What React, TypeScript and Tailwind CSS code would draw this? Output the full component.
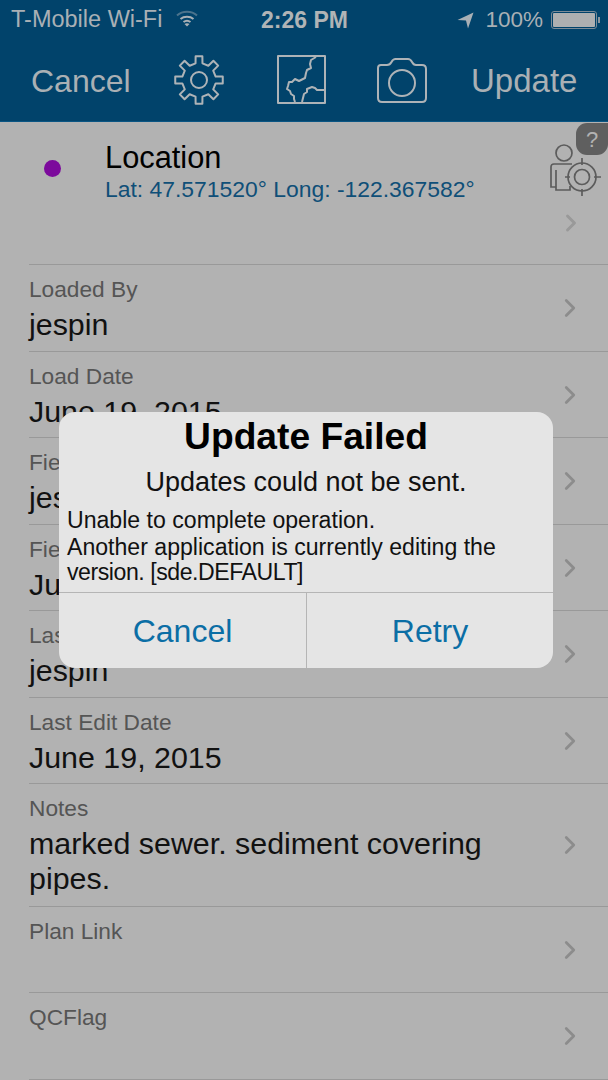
import { ChevronRight } from 'lucide-react';

const font = { fontFamily: '"Liberation Sans", Arial, sans-serif' };

const gearPath = () => {
  const cx = 25;
  const cy = 25;
  const teeth = 8;
  const pts: string[] = [];
  for (let i = 0; i < teeth; i++) {
    const a = (i * Math.PI * 2) / teeth - Math.PI / 2;
    const step = Math.PI / teeth;
    const p = (r: number, t: number) =>
      `${(cx + r * Math.cos(t)).toFixed(2)} ${(cy + r * Math.sin(t)).toFixed(2)}`;
    pts.push(p(17, a - step * 0.52), p(24, a - step * 0.36), p(24, a + step * 0.36), p(17, a + step * 0.52));
  }
  return `M${pts.join('L')}Z`;
};

const GearIcon = () => (
  <svg width="50" height="50" viewBox="0 0 50 50" fill="none" stroke="#aeb3b7" strokeWidth="2" strokeLinejoin="round">
    <path d={gearPath()} />
    <circle cx="25" cy="25" r="8" />
  </svg>
);

const MapIcon = () => (
  <svg width="50" height="49" viewBox="0 0 50 49" fill="none" stroke="#aeb3b7" strokeWidth="2" strokeLinejoin="round">
    <rect x="1" y="1" width="47" height="47" />
    <path d="M39 2 L34 5 L33 9 L34 13 L30 15 L29 18 L28 23 L24 25 L22 26 L18 24 L15 27 L12 27 L11 31 L10 34 L13 36 L14 39 L17 41 L17 44 L18 47" />
    <path d="M25 47 L26 43 L27 39 L30 37 L30 34 L35 32 L38 33 L40 35 L44 35 L48 35" />
  </svg>
);

const CameraIcon = () => (
  <svg width="50" height="45" viewBox="0 0 50 45" fill="none" stroke="#aeb3b7" strokeWidth="2" strokeLinejoin="round">
    <path d="M4 7 H10 C12.500 7 13.500 6 14.500 4 C15.500 2 16.500 1 18.500 1 H31 C33 1 34 2 35 4 C36 6 37 7 39 7 H45 C47.500 7 49 8.500 49 11 V40 C49 42.500 47.500 44 45 44 H5 C2.500 44 1 42.500 1 40 V10 C1 8.500 2 7 4 7 Z" />
    <circle cx="25" cy="25" r="13" />
  </svg>
);

const WifiIcon = () => (
  <svg width="22" height="17" viewBox="0 0 22 17" fill="none" stroke="#a9b0b5" strokeWidth="2">
    <path d="M1 5.500 C6.500 0.500 15.500 0.500 21 5.500" opacity="0.450" />
    <path d="M4.500 9 C8 6 14 6 17.500 9" />
    <path d="M7.500 12 C9.500 10.500 12.500 10.500 14.500 12" />
    <path d="M11 16.500 L8.500 14 C10 13 12 13 13.500 14 Z" fill="#a9b0b5" stroke="none" />
  </svg>
);

const ArrowIcon = () => (
  <svg width="17" height="17" viewBox="0 0 17 17">
    <path d="M0.500 8 L16.500 0.500 L11 16.500 L9 8.500 Z" fill="#a9b0b5" />
  </svg>
);

const SurveyIcon = () => (
  <svg width="54" height="54" viewBox="0 0 54 54" fill="none" stroke="#5c5c5c" strokeWidth="1.700">
    <circle cx="14" cy="9" r="8" />
    <path d="M22 20 H4 Q1 20 1 23 V43 H6 V26 M6 43 V46 H20 V42" />
    <circle cx="32" cy="33" r="14" fill="#b2b2b2" />
    <circle cx="32" cy="33" r="7.500" />
    <path d="M32 14 V21 M32 45 V52 M15 33 H20 M44 33 H51" />
  </svg>
);

const rows = [
  { label: 'Loaded By', value: 'jespin', h: 'h-[87px]' },
  { label: 'Load Date', value: 'June 19, 2015', h: 'h-[86px]' },
  { label: 'Field Checked By', value: 'jespin', h: 'h-[87px]' },
  { label: 'Field Check Date', value: 'June 19, 2015', h: 'h-[86px]' },
  { label: 'Last Edited By', value: 'jespin', h: 'h-[87px]' },
  { label: 'Last Edit Date', value: 'June 19, 2015', h: 'h-[86px]' },
  { label: 'Notes', value: 'marked sewer. sediment covering pipes.', h: 'h-[123px]' },
  { label: 'Plan Link', value: '', h: 'h-[86px]' },
  { label: 'QCFlag', value: '', h: 'h-[87px]' },
];

const App = () => {
  return (
    <div className="relative w-[608px] h-[1080px] overflow-hidden bg-[#b2b2b2]" style={font}>
      <header className="h-[122px] bg-[#01436b] border-b border-[#0a5583] text-[#a9b0b5]">
        <div className="h-10 pl-[11px] pr-[11px] flex items-center text-[23.500px]">
          <span className="w-[165px] whitespace-nowrap">T-Mobile Wi-Fi</span>
          <span className="mt-[-3px]"><WifiIcon /></span>
          <span className="ml-[63px] font-bold text-[23px] text-[#b0b4b6] whitespace-nowrap">2:26 PM</span>
          <span className="ml-auto mr-[11px]"><ArrowIcon /></span>
          <span className="mr-[8px] text-[22.500px]">100%</span>
          <div className="w-[46px] h-[18px] border border-[#7d8c97] rounded-[3px] p-[1px] relative">
            <div className="w-full h-full bg-[#aeb0b1] rounded-[1px]" />
            <div className="absolute right-[-4px] top-[5px] w-[2px] h-[6px] bg-[#8d98a0]" />
          </div>
        </div>
        <div className="h-[81px] pl-[31px] flex items-center text-[#aab0b4]">
          <span className="text-[32px] w-[143px] whitespace-nowrap">Cancel</span>
          <span className="w-[103px] mt-[-2px]"><GearIcon /></span>
          <span className="w-[100px] mt-[-2px]"><MapIcon /></span>
          <span className="w-[94px] mt-[-1px]"><CameraIcon /></span>
          <span className="text-[33px] whitespace-nowrap">Update</span>
        </div>
      </header>

      <main>
        <div className="relative h-[143px] ml-[29px] border-b border-[#999999]">
          <div className="absolute left-[15px] top-[38px] w-[17px] h-[17px] rounded-full bg-[#7c0a9c]" />
          <div className="pl-[76px] pt-[19px]">
            <div className="text-[30.800px] leading-[34px] text-black">Location</div>
            <div className="text-[22.900px] leading-[28px] text-[#0f4f78]">Lat: 47.571520° Long: -122.367582°</div>
          </div>
          <div className="absolute left-[521px] top-[22px]"><SurveyIcon /></div>
          <div className="absolute right-0 top-[1px] w-[32px] h-[32px] rounded-tl-[11px] rounded-bl-[11px] rounded-br-[11px] bg-[#5f5f5f] flex items-center justify-center text-[22px] text-[#b2b2b2]">?</div>
          <ChevronRight className="absolute left-[528px] top-[87px] w-[28px] h-[28px] text-[#999999]" strokeWidth={2.500} />
        </div>

        {rows.map((row) => (
          <div key={row.label} className={`relative ml-[29px] border-b border-[#999999] ${row.h}`}>
            <div className="pt-[11px] pr-[90px]">
              <div className="text-[22.700px] leading-[26px] text-[#555555]">{row.label}</div>
              <div className="text-[30.400px] leading-[35px] mt-[5px] text-[#111111]">{row.value}</div>
            </div>
            <ChevronRight className="absolute left-[526px] top-1/2 -translate-y-1/2 w-[30px] h-[30px] text-[#8c8c8c]" strokeWidth={2.200} />
          </div>
        ))}
      </main>

      <div className="absolute left-[59px] top-[412px] w-[494px] h-[256px] rounded-[16px] bg-[#e5e5e5] flex flex-col text-[#111111]">
        <div className="text-center font-bold text-[37.200px] leading-[42px] text-black mt-[3px]">Update Failed</div>
        <div className="text-center text-[27px] leading-[30px] mt-[10px]">Updates could not be sent.</div>
        <div className="px-[8px] text-[23.100px] leading-[26px] mt-[10px]">
          <div>Unable to complete operation.</div>
          <div className="mt-[1px]">Another application is currently editing the</div>
          <div className="tracking-[-0.45px] mt-[-1px]">version. [sde.DEFAULT]</div>
        </div>
        <div className="mt-auto h-[76px] flex border-t border-[#b5b5b5] text-[32px] text-[#0b6ea5]">
          <div className="w-[248px] border-r border-[#b5b5b5] flex items-center justify-center">Cancel</div>
          <div className="flex-1 flex items-center justify-center">Retry</div>
        </div>
      </div>
    </div>
  );
};

export default App;
